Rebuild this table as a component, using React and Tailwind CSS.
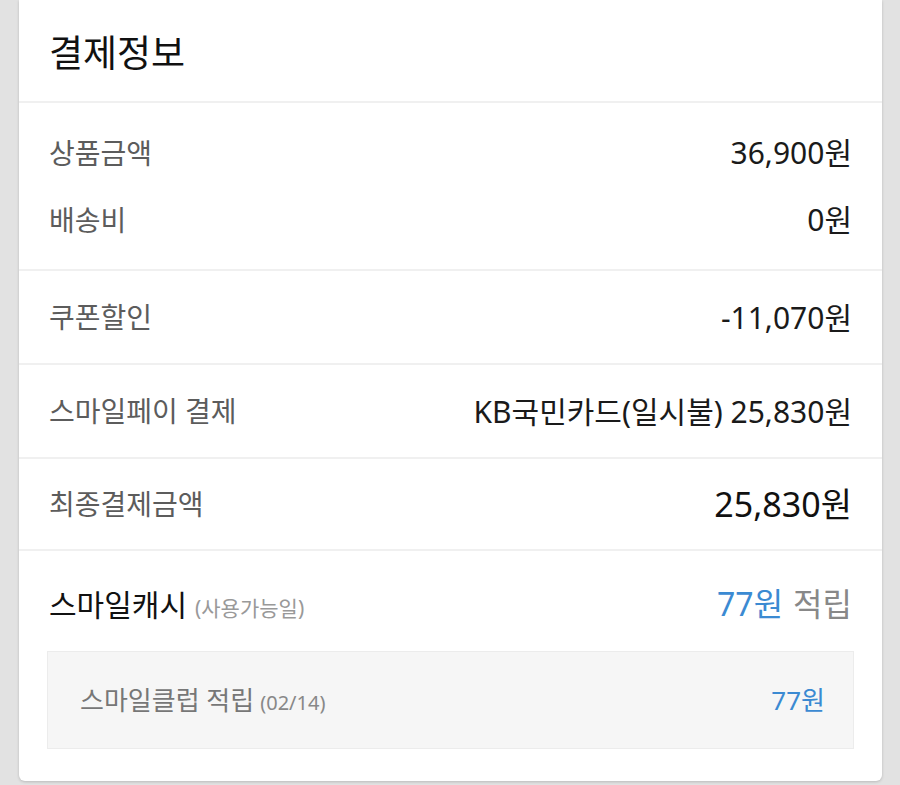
import React from 'react';

const font = { fontFamily: '"Noto Sans", "Noto Sans CJK KR", sans-serif' };

const Row = ({ label, value, className = 'h-[67px]' }) => (
    <div className={`flex items-center justify-between ${className}`}>
        <span className="text-[28px] text-[#5c5c5c]">{label}</span>
        <span className="text-[30px] text-[#1a1a1a]">{value}</span>
    </div>
);

const App = () => {
    return (
        <div className="w-[900px] h-[785px] bg-[#e2e2e2] overflow-hidden" style={font}>
            <div className="mx-[19px] w-[863px] bg-white rounded-b-[6px] shadow-[0_1px_3px_rgba(0,0,0,0.18)]">
                {/* header */}
                <div className="h-[103px] flex items-center px-[30px] border-b-2 border-[#f0f0f0]">
                    <h2 className="text-[37px] text-[#111] leading-none pt-[4px]">결제정보</h2>
                </div>

                <div className="px-[30px] py-[16px] border-b-2 border-[#f0f0f0]">
                    <Row label="상품금액" value="36,900원" />
                    <Row label="배송비" value="0원" />
                </div>

                <div className="px-[30px] border-b-2 border-[#f0f0f0]">
                    <Row label="쿠폰할인" value="-11,070원" className="h-[92px]" />
                </div>

                <div className="px-[30px] border-b-2 border-[#f0f0f0]">
                    <Row label="스마일페이 결제" value="KB국민카드(일시불) 25,830원" className="h-[92px]" />
                </div>

                <div className="px-[30px] border-b-2 border-[#f0f0f0]">
                    <div className="flex items-center justify-between h-[90px]">
                        <span className="text-[28px] text-[#5c5c5c]">최종결제금액</span>
                        <span className="text-[34px] text-[#111]">25,830원</span>
                    </div>
                </div>

                {/* smile cash */}
                <div className="px-[28px] pt-[20px] pb-[32px]">
                    <div className="flex items-center justify-between h-[66px] px-[2px]">
                        <div className="flex items-baseline gap-[8px]">
                            <span className="text-[30px] text-[#111]">스마일캐시</span>
                            <span className="text-[21px] text-[#999]">(사용가능일)</span>
                        </div>
                        <div className="flex items-baseline gap-[10px] text-[32px]">
                            <span className="text-[#3b8ad2]">77원</span>
                            <span className="text-[#888]">적립</span>
                        </div>
                    </div>
                    <div className="mt-[14px] h-[98px] bg-[#f6f6f6] border border-[#ececec] flex items-center justify-between pl-[32px] pr-[28px]">
                        <div className="flex items-baseline gap-[6px]">
                            <span className="text-[26px] text-[#777]">스마일클럽 적립</span>
                            <span className="text-[20px] text-[#888]">(02/14)</span>
                        </div>
                        <span className="text-[26px] text-[#3b8ad2]">77원</span>
                    </div>
                </div>
            </div>
        </div>
    );
};

export default App;
